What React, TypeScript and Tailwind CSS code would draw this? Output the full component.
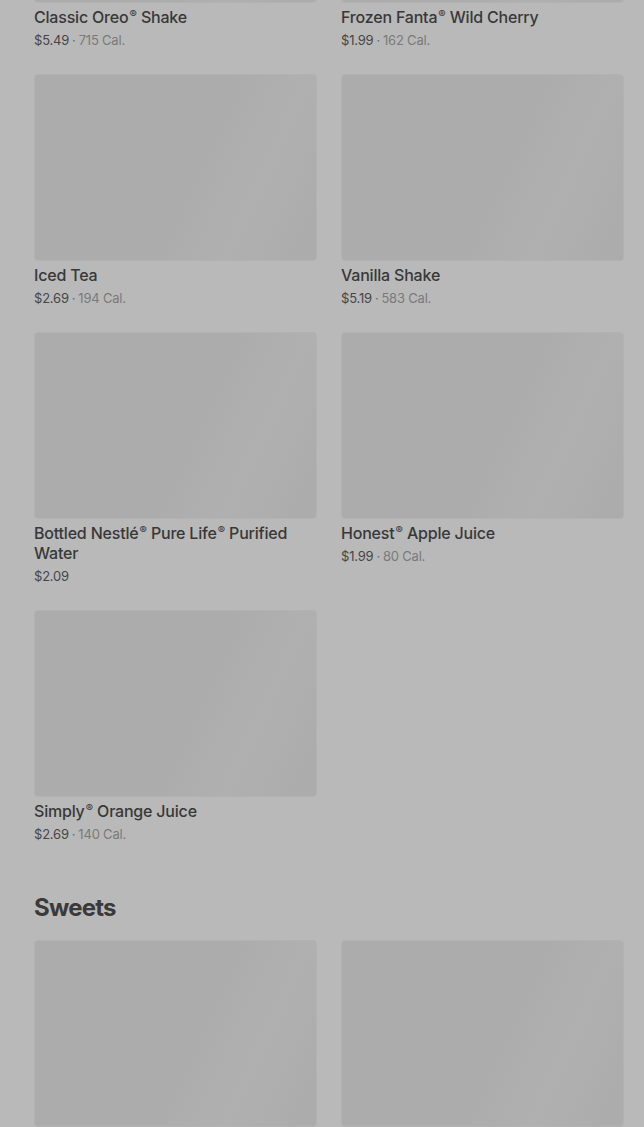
import React from "react";

type Item = { name: string; price: string; cal?: string };

const rows: Item[][] = [
  [
    { name: "Classic Oreo® Shake", price: "$5.49", cal: "715 Cal." },
    { name: "Frozen Fanta® Wild Cherry", price: "$1.99", cal: "162 Cal." },
  ],
  [
    { name: "Iced Tea", price: "$2.69", cal: "194 Cal." },
    { name: "Vanilla Shake", price: "$5.19", cal: "583 Cal." },
  ],
  [
    { name: "Bottled Nestlé® Pure Life® Purified Water", price: "$2.09" },
    { name: "Honest® Apple Juice", price: "$1.99", cal: "80 Cal." },
  ],
  [{ name: "Simply® Orange Juice", price: "$2.69", cal: "140 Cal." }],
];

function Word({ w }: { w: string }) {
  const reg = w.endsWith("®");
  const base = reg ? w.slice(0, -1) : w;
  return (
    <span className="whitespace-nowrap">
      {base}
      {reg && (
        <span className="ml-[1px] align-top text-[11px] leading-[14px] tracking-normal">®</span>
      )}
    </span>
  );
}

function Name({ text }: { text: string }) {
  const words = text.split(" ");
  return (
    <>
      {words.map((w, i) => (
        <React.Fragment key={i}>
          <Word w={w} />
          {i < words.length - 1 ? " " : null}
        </React.Fragment>
      ))}
    </>
  );
}

function Img() {
  return (
    <div className="h-[187px] w-full rounded-[4px] border border-[#b2b2b2] bg-[linear-gradient(115deg,#acacac_0%,#acacac_55%,#b0b0b0_75%,#acacac_95%)]" />
  );
}

function Card({ item }: { item: Item }) {
  return (
    <div className="flex flex-col">
      <Img />
      <div className="mt-[4px] text-[16px] leading-[20px] font-medium tracking-[-0.2px] text-[#383838]">
        <Name text={item.name} />
      </div>
      <div className="mt-[4px] text-[13px] leading-[18px] tracking-[-0.2px] text-[#464646]">
        {item.price}
        {item.cal && (
          <>
            <span className="px-[3px] text-[#6a6a6a]">·</span>
            <span className="text-[#7a7a7a]">{item.cal}</span>
          </>
        )}
      </div>
    </div>
  );
}

export default function App() {
  return (
    <div
      className="h-[1127px] w-[644px] overflow-hidden bg-[#b9b9b9]"
      style={{ fontFamily: "Inter, 'Noto Sans', sans-serif" }}
    >
      <div className="-mt-[184px] pl-[34px] pr-[20px]">
        <div className="grid grid-cols-2 gap-x-[24px] gap-y-[25px]">
          {rows.flat().map((it, i) => (
            <Card key={i} item={it} />
          ))}
        </div>
        <h2 className="mt-[49px] text-[24px] leading-[32px] font-bold tracking-[-0.8px] text-[#3a3a3a]">
          Sweets
        </h2>
        <div className="mt-[16px] grid grid-cols-2 gap-x-[24px]">
          <Img />
          <Img />
        </div>
      </div>
    </div>
  );
}
